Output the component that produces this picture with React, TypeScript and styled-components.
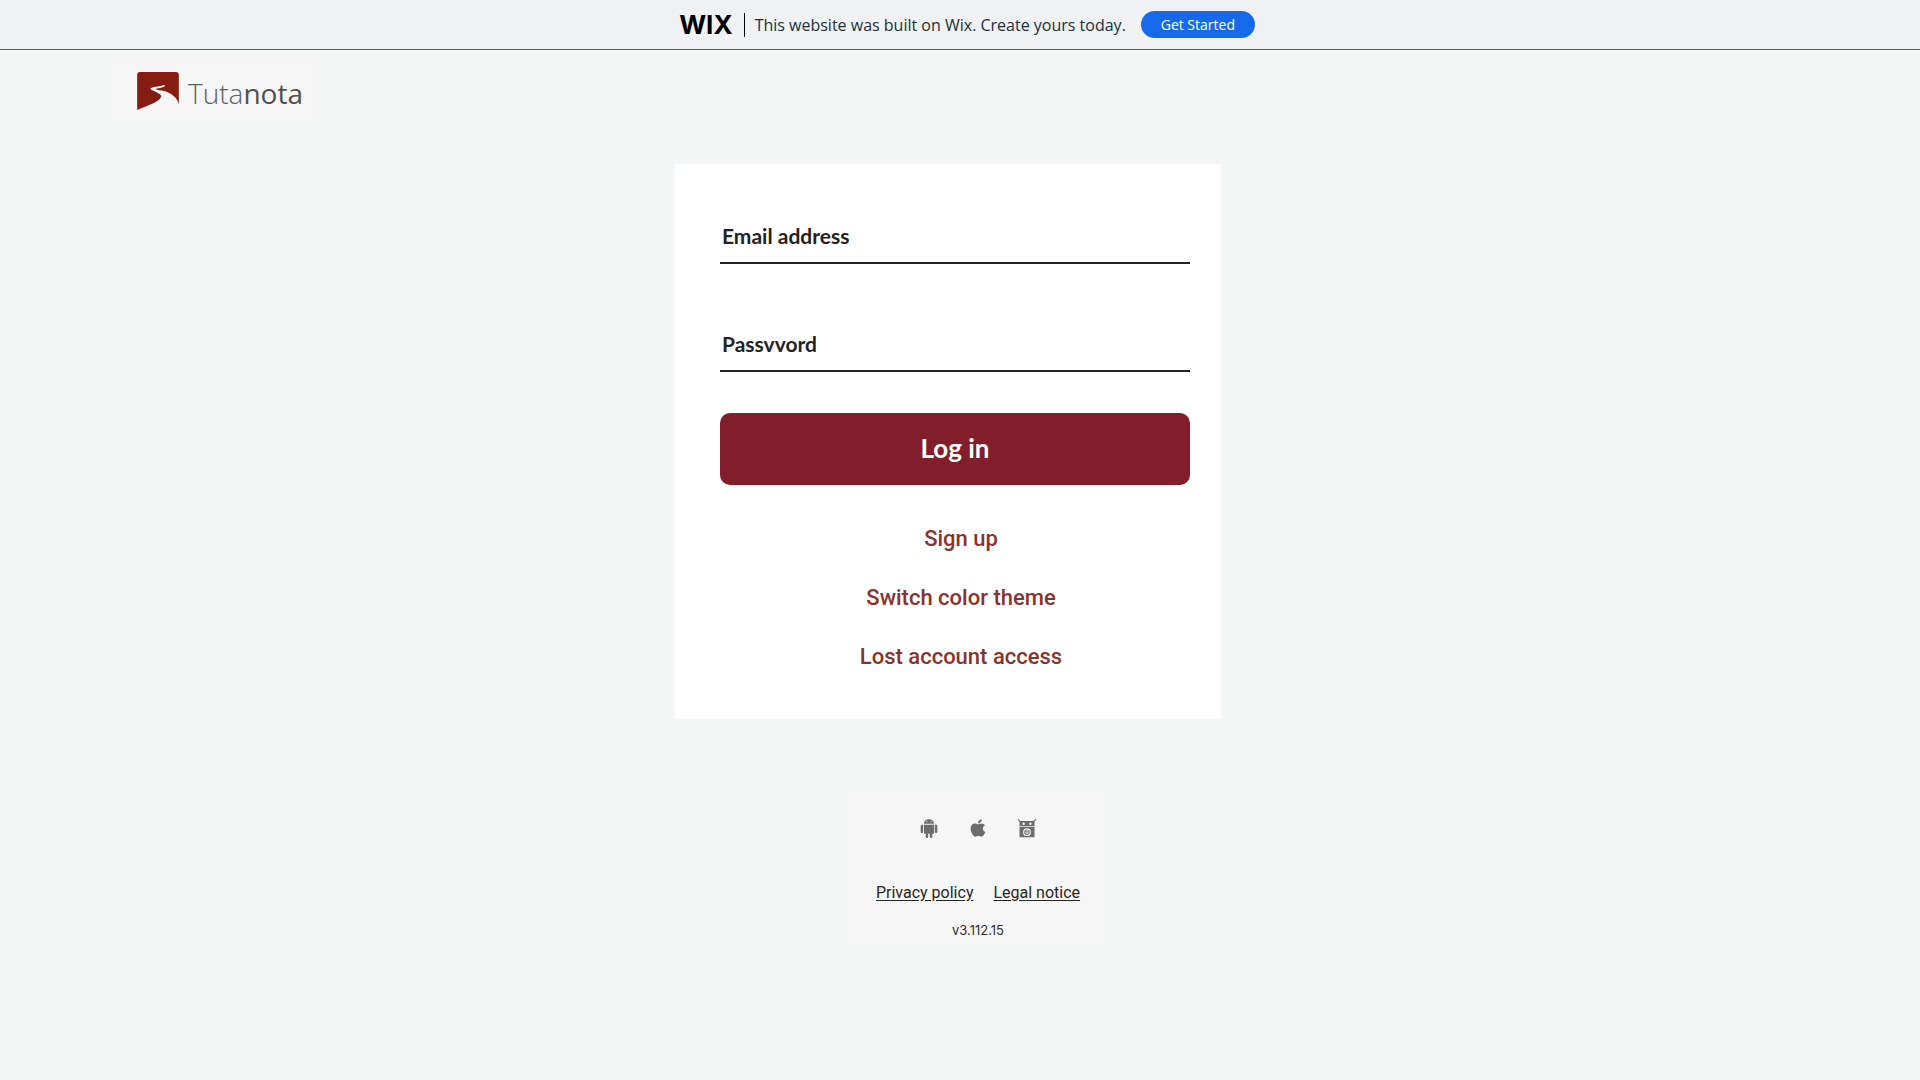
import React from "react";
import styled, { createGlobalStyle } from "styled-components";
import { FaApple } from "react-icons/fa";

const GlobalStyle = createGlobalStyle`
  * { box-sizing: border-box; }
  body {
    margin: 0;
    min-height: 100vh;
    background: #f4f6f5;
    font-family: Inter, "Liberation Sans", sans-serif;
    color: #212121;
  }
`;

const Banner = styled.aside`
  display: flex;
  align-items: center;
  justify-content: center;
  height: 50px;
  padding-left: 14px;
  background: #eff1f2;
  border-bottom: 1px solid #166aea;
`;

const WixLogo = styled.a`
  color: #000;
  font-size: 26px;
  line-height: 24px;
  font-weight: 700;
  text-decoration: none;
  padding-right: 11px;
  margin-right: 10px;
  border-right: 1px solid #000;
`;

const BannerText = styled.span`
  font-family: "Open Sans", sans-serif;
  font-size: 16px;
  line-height: 24px;
  color: #20303c;
  margin-right: 15px;
`;

const BannerButton = styled.button`
  width: 114px;
  height: 27px;
  padding: 0;
  border: 0;
  border-radius: 14px;
  background: #166aea;
  color: #fff;
  font-family: "Open Sans", sans-serif;
  font-size: 14px;
  cursor: pointer;
`;

const Header = styled.header`
  padding: 10px 112px 0;
`;

const Brand = styled.a`
  display: inline-flex;
  align-items: center;
  gap: 9px;
  height: 60px;
  padding: 2px 12px 0 25px;
  background: #f6f6f6;
  color: #616161;
  text-decoration: none;
`;

const BrandName = styled.span`
  padding-top: 4px;
  font-family: "Open Sans", sans-serif;
  font-size: 28px;
  line-height: 38px;
  font-weight: 300;
  strong { font-weight: 500; color: #4f5052; }
`;

const Main = styled.main`
  display: flex;
  justify-content: center;
  padding: 44px 24px 0 0;
`;

const Card = styled.form`
  display: flex;
  flex-direction: column;
  width: 546px;
  padding: 49px 31px 46px 45px;
  background: #fff;
`;

const Field = styled.input`
  height: 51px;
  padding: 0 2px 5px;
  margin-bottom: 57px;
  border: 0;
  border-bottom: 2px solid #242323;
  background: transparent;
  font-family: Lato, sans-serif;
  font-size: 21px;
  font-weight: 700;
  color: #242323;
  outline: none;
  &::placeholder { color: #242323; opacity: 1; }
`;

const LoginButton = styled.button`
  height: 72px;
  margin-top: -16px;
  padding: 0 0 2px;
  border: 0;
  border-radius: 10px;
  background: #821e2a;
  color: #fff;
  font-family: Lato, sans-serif;
  font-size: 26px;
  font-weight: 700;
  cursor: pointer;
`;

const Links = styled.nav`
  display: flex;
  flex-direction: column;
  align-items: center;
  gap: 29px;
  padding: 39px 0 1px 12px;
`;

const TextLink = styled.a`
  color: #8a322c;
  font-family: Roboto, sans-serif;
  font-size: 22px;
  line-height: 30px;
  font-weight: 500;
  text-decoration: none;
`;

const FooterArea = styled.footer`
  display: flex;
  justify-content: center;
  padding: 70px 0 0 32px;
`;

const FooterBox = styled.div`
  display: flex;
  flex-direction: column;
  align-items: center;
  width: 254px;
  padding: 29px 0 7px 4px;
  background: #f6f6f6;
`;

const Stores = styled.div`
  display: flex;
  gap: 29px;
`;

const StoreLink = styled.a`
  display: flex;
  color: #6c6c6c;
`;

const Legal = styled.div`
  display: flex;
  gap: 20px;
  margin-top: 43px;
`;

const LegalLink = styled.a`
  color: #262626;
  font-family: Roboto, sans-serif;
  font-size: 16px;
  line-height: 24px;
  text-underline-offset: 2px;
`;

const Version = styled.span`
  margin-top: 17px;
  font-size: 13px;
  line-height: 16px;
  color: #303030;
`;

const TutanotaMark = () => (
  <svg width="42" height="38" viewBox="0 0 125 114" aria-hidden="true">
    <path fill="#871c12" d="M0 9Q0 0 9 0H116Q125 0 125 9V97C121 78 105 66 84 58C70 54 60 55 56 52C54 49 83 47 83 42L82 38C78 43 40 43 40 50C40 56 73 62 72 73C70 88 40 98 0 114Z" />
  </svg>
);

const AndroidMark = () => (
  <svg width="20" height="20" viewBox="0 0 24 24" fill="currentColor" aria-hidden="true">
    <path d="M6 18c0 .55.45 1 1 1h1v3.5c0 .83.67 1.5 1.5 1.5s1.5-.67 1.5-1.5V19h2v3.5c0 .83.67 1.5 1.5 1.5s1.5-.67 1.5-1.5V19h1c.55 0 1-.45 1-1V8H6zM3.5 8C2.670 8 2 8.670 2 9.500v7c0 .83.67 1.500 1.500 1.500S5 17.330 5 16.500v-7C5 8.670 4.330 8 3.500 8zM20.500 8c-.83 0-1.500.67-1.500 1.500v7c0 .83.67 1.500 1.500 1.500s1.500-.67 1.500-1.500v-7c0-.83-.67-1.500-1.500-1.500zM18 7C18 3.700 15.300 1.500 12 1.500S6 3.700 6 7zM10 5.200H8.800V4H10zM15.200 5.200H14V4h1.200z" />
  </svg>
);

const FDroidMark = () => (
  <svg width="20" height="20" viewBox="0 0 24 24" aria-hidden="true">
    <path fill="currentColor" d="M1.500 1 4.200 3.600H19.800L22.500 1 23.200 1.700 21 4.600V10H3V4.600L.8 1.700ZM3 10.800H21V23H3Z" />
    <g fill="#f6f6f6">
      <circle cx="8" cy="7" r="1.500" />
      <circle cx="16" cy="7" r="1.500" />
    </g>
    <g fill="none" stroke="#f6f6f6" strokeWidth="1.400">
      <circle cx="12" cy="17" r="4" />
      <path d="M9.500 17H14M14 15.200H11M14 18.800H11" strokeWidth="1" />
    </g>
  </svg>
);

export default function App() {
  return (
    <>
      <GlobalStyle />
      <Banner>
        <WixLogo href="#wix">WIX</WixLogo>
        <BannerText>This website was built on Wix. Create yours today.</BannerText>
        <BannerButton type="button">Get Started</BannerButton>
      </Banner>
      <Header>
        <Brand href="#home">
          <TutanotaMark />
          <BrandName>Tuta<strong>nota</strong></BrandName>
        </Brand>
      </Header>
      <Main>
        <Card onSubmit={(e) => e.preventDefault()}>
          <Field type="email" aria-label="Email address" placeholder="Email address" />
          <Field type="password" aria-label="Passvvord" placeholder="Passvvord" />
          <LoginButton type="submit">Log in</LoginButton>
          <Links>
            <TextLink href="#signup">Sign up</TextLink>
            <TextLink href="#theme">Switch color theme</TextLink>
            <TextLink href="#recover">Lost account access</TextLink>
          </Links>
        </Card>
      </Main>
      <FooterArea>
        <FooterBox>
          <Stores>
            <StoreLink href="#android" aria-label="Android"><AndroidMark /></StoreLink>
            <StoreLink href="#ios" aria-label="iOS"><FaApple size={20} /></StoreLink>
            <StoreLink href="#fdroid" aria-label="F-Droid"><FDroidMark /></StoreLink>
          </Stores>
          <Legal>
            <LegalLink href="#privacy">Privacy policy</LegalLink>
            <LegalLink href="#legal">Legal notice</LegalLink>
          </Legal>
          <Version>v3.112.15</Version>
        </FooterBox>
      </FooterArea>
    </>
  );
}
